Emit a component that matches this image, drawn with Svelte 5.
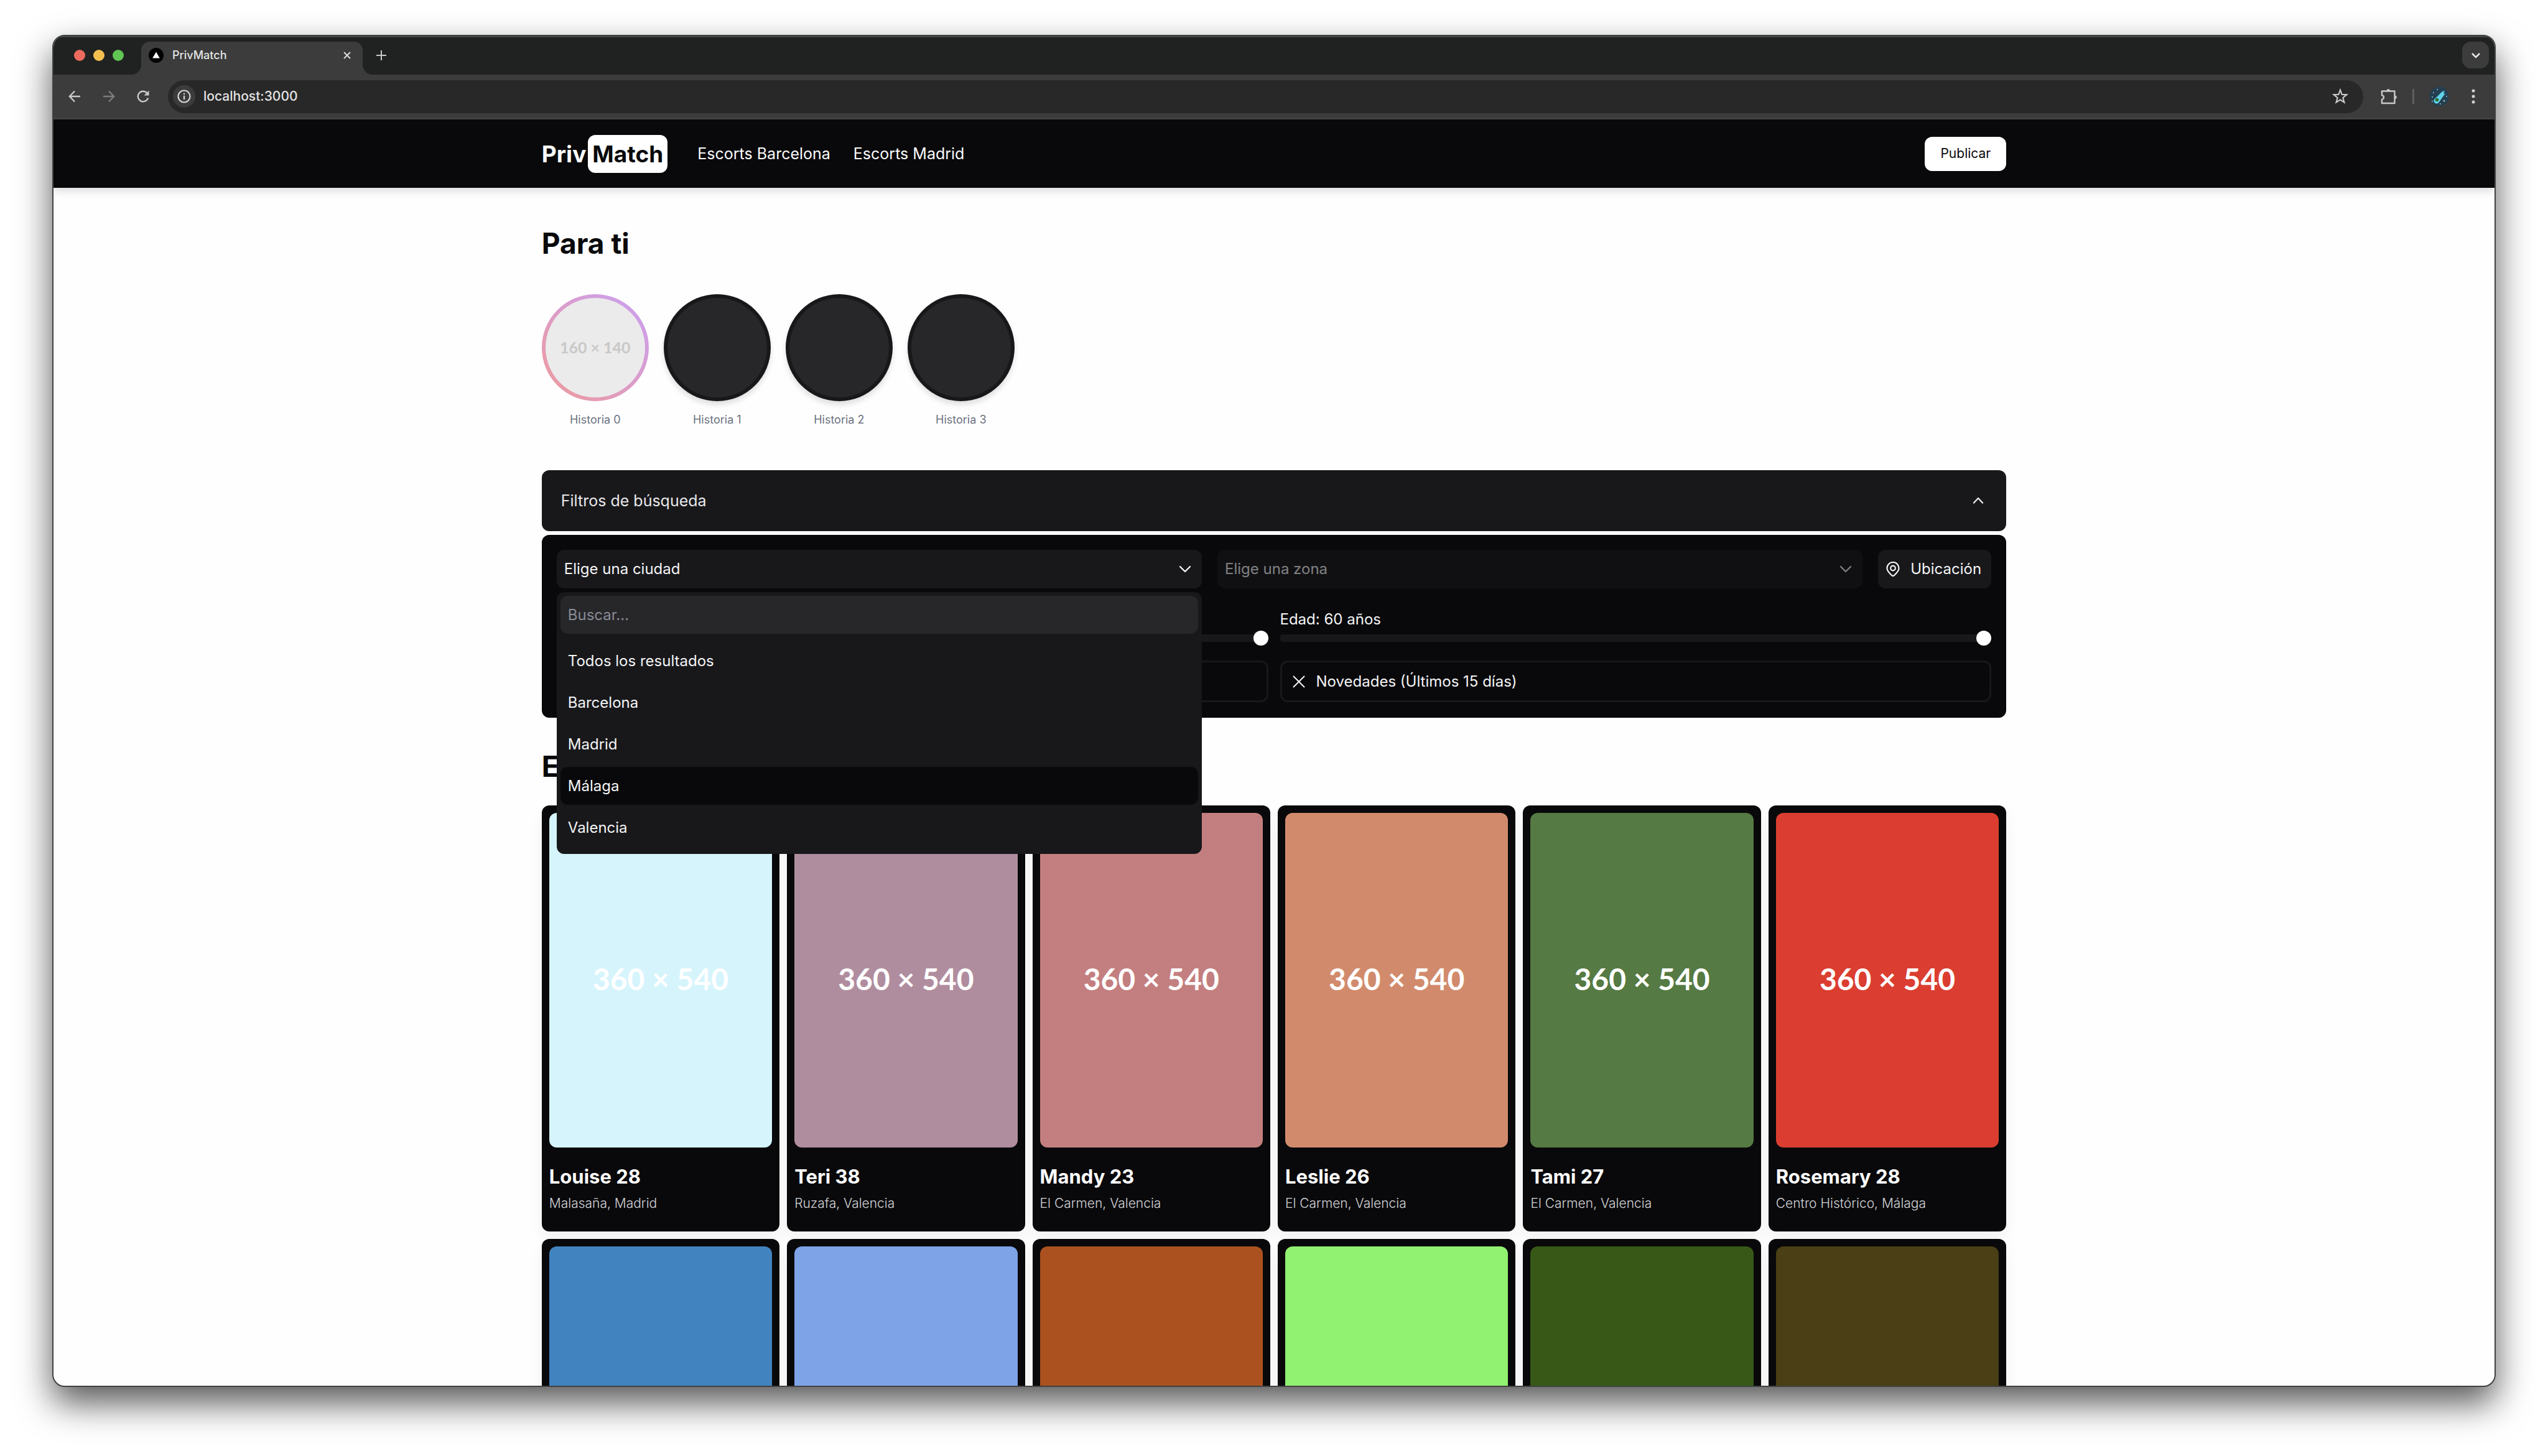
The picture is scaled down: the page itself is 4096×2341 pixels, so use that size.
<script>
  const cities = ['Todos los resultados', 'Barcelona', 'Madrid', 'Málaga', 'Valencia'];
  const stories = [0, 1, 2, 3];
  const people = [
    { name: 'Louise 28', place: 'Malasaña, Madrid', color: '#d6f4fc' },
    { name: 'Teri 38', place: 'Ruzafa, Valencia', color: '#b08d9e' },
    { name: 'Mandy 23', place: 'El Carmen, Valencia', color: '#c37f7f' },
    { name: 'Leslie 26', place: 'El Carmen, Valencia', color: '#d18b6c' },
    { name: 'Tami 27', place: 'El Carmen, Valencia', color: '#567a43' },
    { name: 'Rosemary 28', place: 'Centro Histórico, Málaga', color: '#db3e30' }
  ];
  const nextRow = ['#4183bf', '#7ea3e7', '#ab511f', '#91f171', '#385818', '#4a3f15'];
  let highlighted = $state('Málaga');
  let price = $state(100);
  let age = $state(60);
</script>

{#snippet chevron(d)}
  <svg class="icon" viewBox="0 0 24 24" fill="none" stroke="currentColor" stroke-width="2.400" stroke-linecap="round" stroke-linejoin="round" aria-hidden="true"><path {d} /></svg>
{/snippet}

{#snippet cross()}
  <svg class="icon" viewBox="0 0 24 24" fill="none" stroke="currentColor" stroke-width="2" stroke-linecap="round" aria-hidden="true"><path d="M3.500 3.500l17 17M20.500 3.500l-17 17" /></svg>
{/snippet}

<div class="desktop">
  <div class="window">
    <div class="tabstrip">
      <div class="lights"><span class="red"></span><span class="yellow"></span><span class="green"></span></div>
      <div class="tab">
        <svg class="favicon" viewBox="0 0 24 24" aria-hidden="true"><circle cx="12" cy="12" r="12" fill="#000" /><path d="M12 6.600l5.800 10H6.200z" fill="#fff" /></svg>
        <span class="tab-title">PrivMatch</span>
        <button class="bare" aria-label="Close tab"><svg class="glyph" viewBox="0 0 14 14" fill="none" stroke="#dcdcdc" stroke-width="2"><path d="M2 2l10 10M12 2L2 12" /></svg></button>
      </div>
      <button class="bare newtab" aria-label="New tab"><svg class="glyph-lg" viewBox="0 0 16 16" fill="none" stroke="#c9c9c9" stroke-width="2"><path d="M8 0v16M0 8h16" /></svg></button>
      <button class="bare tabsearch" aria-label="Search tabs"><svg class="glyph" viewBox="0 0 14 14" fill="none" stroke="#e6e6e6" stroke-width="2.500"><path d="M1 4l6 6 6-6" /></svg></button>
    </div>
    <div class="toolbar">
      <button class="bare nav" aria-label="Back"><svg class="nav-icon" viewBox="0 0 20 20" fill="none" stroke="#c7c7c7" stroke-width="2.400"><path d="M19 10H2M10 1.500L1.800 10l8.200 8.500" /></svg></button>
      <button class="bare nav" aria-label="Forward"><svg class="nav-icon" viewBox="0 0 20 20" fill="none" stroke="#7c7c7c" stroke-width="2.400"><path d="M1 10h17M10 1.500l8.200 8.500-8.200 8.500" /></svg></button>
      <button class="bare nav" aria-label="Reload"><svg class="nav-icon" viewBox="0 0 20 20" fill="none" stroke="#c7c7c7" stroke-width="2.400"><path d="M18 12.500A8.300 8.300 0 1 1 16.500 4.800" /><path d="M19.500 0.500v8h-8z" fill="#c7c7c7" stroke="none" /></svg></button>
      <div class="omnibox">
        <span class="info"><svg viewBox="0 0 22 22" fill="none" stroke="#d6d6d6" stroke-width="2.200" aria-hidden="true"><circle cx="11" cy="11" r="9.500" /><path d="M11 9.800v6.200M11 5.800v2.200" /></svg></span>
        <input class="url" aria-label="Address" value="localhost:3000" />
        <button class="bare" aria-label="Bookmark"><svg class="star" viewBox="0 0 24 24" fill="none" stroke="#c9c9c9" stroke-width="2"><path d="M12 2.500l2.500 6.600 7 .4-5.500 4.400 1.900 6.900L12 16.900l-5.900 3.900L8 13.900 2.500 9.500l7-.4z" /></svg></button>
      </div>
      <button class="bare ext" aria-label="Extensions"><svg viewBox="0 0 26 26" fill="none" stroke="#c9c9c9" stroke-width="2.400" stroke-linejoin="round"><path d="M2 4.500h20.500V24H2v-6.200c4-1 4-5.600 0-6.600z" /><path d="M9.500 4a2.800 2.800 0 0 1 5.600 0zM23 11.500a2.800 2.800 0 0 1 0 5.600z" fill="#c9c9c9" stroke="none" /></svg></button>
      <span class="divider"></span>
      <button class="bare avatar" aria-label="Profile">
        <svg viewBox="0 0 32 32"><circle cx="16" cy="16" r="15.500" fill="#243f52" /><path d="M24 5L10 19a4.500 4.500 0 1 0 6 6L26 11l-3 1 2-5-4 2z" fill="#5fd3e8" /><circle cx="12.500" cy="21.500" r="2.800" fill="#2f6a2c" /><g fill="#8fc0b0"><circle cx="13" cy="5" r="1" /><circle cx="7" cy="10" r="1" /><circle cx="5" cy="17" r="1" /><circle cx="24" cy="23" r="1.500" /><circle cx="18" cy="28" r="1" /><circle cx="28" cy="16" r="1" /><circle cx="5" cy="24" r="1" /></g></svg>
      </button>
      <button class="bare menu" aria-label="Menu"><svg viewBox="0 0 6 24" fill="#d0d0d0"><circle cx="3" cy="3" r="2.500" /><circle cx="3" cy="12" r="2.500" /><circle cx="3" cy="21" r="2.500" /></svg></button>
    </div>

    <div class="page">
      <header>
        <a class="brand" href="/"><span>Priv</span><span class="match">Match</span></a>
        <nav><a href="/barcelona">Escorts Barcelona</a><a href="/madrid">Escorts Madrid</a></nav>
        <button class="publish">Publicar</button>
      </header>
      <main>
        <h2>Para ti</h2>
        <div class="stories">
          {#each stories as n}
            <button class="story">
              <span class="ring" class:fresh={n === 0}><span class="disc">{#if n === 0}160 × 140{/if}</span></span>
              <span>Historia {n}</span>
            </button>
          {/each}
        </div>

        <button class="filters-head" aria-expanded="true">Filtros de búsqueda {@render chevron('M5 15.500L12 8l7 7.500')}</button>
        <section class="filters">
          <div class="row">
            <div class="combo">
              <button class="field" aria-expanded="true">Elige una ciudad {@render chevron('M4 8l8 8 8-8')}</button>
              <div class="dropdown">
                <input type="text" aria-label="Buscar ciudad" placeholder="Buscar..." />
                <div class="options" role="listbox" aria-label="Ciudad">
                  {#each cities as city}
                    <button role="option" aria-selected={city === highlighted} class:active={city === highlighted} onmouseenter={() => (highlighted = city)}>{city}</button>
                  {/each}
                </div>
              </div>
            </div>
            <div class="combo"><button class="field" disabled>Elige una zona {@render chevron('M4 8l8 8 8-8')}</button></div>
            <button class="field locate">
              <svg class="icon" viewBox="0 0 24 24" fill="none" stroke="currentColor" stroke-width="2.200" stroke-linejoin="round" aria-hidden="true"><path d="M12 23c-1.500 0-2.500-1.500-4-3C4.500 16.600 2.500 14 2.500 10.500a9.500 9.500 0 0 1 19 0c0 3.500-2 6.100-5.500 9.500-1.500 1.500-2.500 3-4 3z" /><circle cx="12" cy="10.500" r="3.800" /></svg>
              Ubicación
            </button>
          </div>
          <div class="halves">
            <label>Precio: {price} €<input type="range" min="0" max="100" bind:value={price} /></label>
            <label>Edad: {age} años<input type="range" min="18" max="60" bind:value={age} /></label>
            <button class="toggle">{@render cross()} Verificados</button>
            <button class="toggle">{@render cross()} Novedades (Últimos 15 días)</button>
          </div>
        </section>

        <h2 class="results">Escorts</h2>
        <div class="cards">
          {#each people as p}
            <article>
              <div class="photo" style:background={p.color}>360 × 540</div>
              <div class="caption"><h3>{p.name}</h3><p>{p.place}</p></div>
            </article>
          {/each}
          {#each nextRow as color}
            <article><div class="photo" style:background={color}></div></article>
          {/each}
        </div>
      </main>
    </div>
  </div>
</div>

<style>
  :global(body) { background: #fff; }
  * { box-sizing: border-box; margin: 0; }
  button, input { font: inherit; color: inherit; border: 0; }
  button { display: flex; align-items: center; cursor: pointer; }
  a { color: inherit; text-decoration: none; }
  svg { display: block; flex: none; }
  .desktop { height: 100vh; padding: 56px 84px 111px; font-family: Inter, "Liberation Sans", sans-serif; font-size: 24px; line-height: 36px; }
  .window { height: 100%; display: flex; flex-direction: column; overflow: hidden; border: 2px solid #404242; border-radius: 20px; background: #fefefe; box-shadow: 0 26px 56px rgba(0, 0, 0, .66); }
  .bare { background: none; padding: 0; justify-content: center; }

  .tabstrip { flex: none; display: flex; height: 62px; padding: 7px 9px 0 33px; background: #202221; border-top: 2px solid #434545; font-size: 18px; }
  .lights { display: flex; gap: 13px; margin: 13px 28px 0 0; }
  .lights span { width: 18px; height: 18px; border-radius: 50%; }
  .red { background: #ed6a5e; }
  .yellow { background: #f5bf4f; }
  .green { background: #61c554; }
  .tab { position: relative; display: flex; align-items: center; gap: 14px; width: 356px; padding: 0 18px 9px 12px; background: #3c3c3c; border-radius: 14px 14px 0 0; color: #e3e3e3; }
  .tab::before, .tab::after { content: ""; position: absolute; bottom: 0; width: 16px; height: 16px; }
  .tab::before { right: 100%; background: radial-gradient(circle at 0 0, transparent 16px, #3c3c3c 16px); }
  .tab::after { left: 100%; background: radial-gradient(circle at 100% 0, transparent 16px, #3c3c3c 16px); }
  .tab-title { flex: 1; font-weight: 500; }
  .favicon { width: 24px; height: 24px; }
  .glyph { width: 14px; height: 14px; }
  .glyph-lg { width: 16px; height: 16px; }
  .newtab { margin-left: 22px; padding-bottom: 9px; }
  .tabsearch { margin-left: auto; width: 43px; height: 43px; background: #3c3c3c; border-radius: 14px; }
  .toolbar { flex: none; display: flex; align-items: center; height: 72px; padding: 0 31px 0 16px; background: #3c3c3c; border-bottom: 2px solid #464646; }
  .nav { width: 36px; height: 36px; margin-right: 19px; }
  .nav-icon { width: 20px; height: 20px; }
  .omnibox { flex: 1; display: flex; align-items: center; height: 53px; margin-left: 3px; padding: 0 24px 0 8px; border-radius: 27px; background: #282828; }
  .info { display: grid; place-items: center; width: 36px; height: 36px; border-radius: 50%; background: #3c3c3c; }
  .info svg { width: 22px; height: 22px; }
  .url { flex: 1; min-width: 0; padding: 0; margin-left: 13px; background: none; color: #e3e3e3; font-size: 21px; font-weight: 500; }
  .star { width: 26px; height: 26px; }
  .ext { margin-left: 28px; }
  .ext svg { width: 26px; height: 26px; }
  .divider { width: 3px; height: 24px; margin: 0 24px 0 25px; background: #606060; }
  .avatar svg { width: 32px; height: 32px; }
  .menu { margin-left: 36px; }
  .menu svg { width: 6px; height: 24px; }

  .page { flex: 1; min-height: 0; overflow: hidden; }
  header { position: relative; display: flex; align-items: center; height: 110px; padding: 0 20%; background: #09090b; color: #fafafa; box-shadow: 0 6px 12px rgba(0, 0, 0, .12); }
  .brand { display: flex; align-items: center; gap: 3px; font-size: 37px; font-weight: 700; line-height: 61px; }
  .match { padding: 0 7px; border-radius: 12px; background: #fff; color: #09090b; }
  nav { display: flex; gap: 37px; margin-left: 48px; font-size: 25px; }
  .publish { height: 55px; margin-left: auto; padding: 0 25px; border-radius: 12px; background: #fff; color: #09090b; font-size: 21px; }
  main { padding: 59px 20% 0; }
  h2 { font-size: 46px; font-weight: 700; line-height: 60px; color: #09090b; }
  .stories { display: flex; gap: 24px; margin: 52px 0 69px; }
  .story { flex-direction: column; gap: 18px; width: 172px; padding: 0; background: none; color: #6b7280; font-size: 18px; line-height: 24px; }
  .ring { display: block; width: 172px; height: 172px; padding: 6px; border-radius: 50%; background: #18181b; box-shadow: 0 6px 9px rgba(0, 0, 0, .12); }
  .ring.fresh { background: linear-gradient(45deg, #ef9a9a, #c9a0f5); box-shadow: none; }
  .disc { display: grid; place-items: center; height: 100%; padding-bottom: 3px; border-radius: 50%; background: #27272a; font: 700 25px/30px Lato, sans-serif; color: #c8c8c8; }
  .fresh .disc { background: #ebebeb; }

  .icon { width: 24px; height: 24px; }
  .filters-head { justify-content: space-between; width: 100%; height: 98px; padding: 0 33px 0 31px; border-radius: 12px; background: #18181b; color: #e8e8ea; font-size: 25px; }
  .filters { display: grid; gap: 24px; margin-top: 6px; padding: 24px 24px 25px; border-radius: 12px; background: #09090b; color: #f4f4f5; }
  .row { display: flex; gap: 25px; }
  .combo { position: relative; flex: 1; }
  .field { justify-content: space-between; width: 100%; height: 62px; padding: 0 15px 0 12px; border-radius: 12px; background: #18181b; }
  .field:disabled { color: #f4f4f5; opacity: .5; }
  .locate { flex: none; justify-content: flex-start; width: 182px; gap: 16px; padding: 0 12px; }
  .dropdown { position: absolute; z-index: 2; top: 100%; left: 0; right: 0; display: grid; gap: 13px; margin-top: 6px; padding: 6px 6px 12px; border-radius: 12px; background: #18181b; }
  .dropdown input { width: 100%; height: 61px; padding: 0 12px; border-radius: 12px; background: #27272a; }
  .dropdown input::placeholder { color: #878b94; opacity: 1; }
  .options { display: grid; gap: 6px; }
  .options button { height: 61px; padding: 0 12px; border-radius: 12px; background: none; }
  .options .active { background: #09090b; }
  .halves { display: grid; grid-template-columns: 1fr 1fr; gap: 24px 19px; }
  label { display: block; padding-top: 8px; }
  input[type="range"] { appearance: none; display: block; width: 100%; height: 24px; background: linear-gradient(#18181b, #18181b) center / 100% 12px no-repeat; border-radius: 12px; }
  input[type="range"]::-webkit-slider-thumb { appearance: none; width: 24px; height: 24px; border-radius: 50%; background: #fff; }
  .toggle { gap: 16px; height: 67px; padding: 0 15px; border: 3px solid #18181b; border-radius: 12px; background: none; }

  .results { margin: 48px 0 33px; }
  .cards { display: grid; grid-template-columns: repeat(6, 1fr); gap: 12px; }
  article { padding: 12px; border-radius: 12px; background: #09090b; color: #fff; box-shadow: 0 12px 23px rgba(0, 0, 0, .05); }
  .photo { display: grid; place-items: center; aspect-ratio: 2 / 3; padding-bottom: 3px; border-radius: 12px; font: 700 48px/60px Lato, sans-serif; }
  .caption { padding: 25px 0 18px; }
  h3 { font-size: 31px; font-weight: 700; line-height: 43px; }
  .caption p { margin-top: 6px; color: #d4d4d8; font-size: 21px; line-height: 31px; font-weight: 300; white-space: nowrap; }
</style>
